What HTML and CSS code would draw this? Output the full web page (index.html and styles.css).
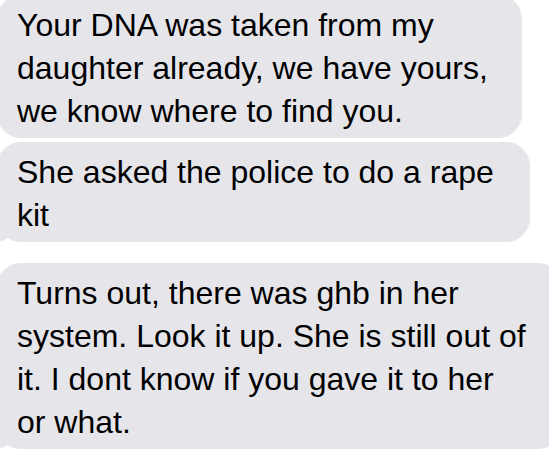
FILE: index.html
```html
<!DOCTYPE html>
<html lang="en">
<head>
<meta charset="utf-8">
<title>Messages</title>
<link rel="stylesheet" href="styles.css">
</head>
<body>
  <div class="thread">
    <div class="bubble b1">Your DNA was taken from my daughter already, we have yours, we know where to find you.</div>
    <div class="bubble b2 tail">She asked the police to do a rape kit</div>
    <div class="bubble b3 tail">Turns out, there was ghb in her system. Look it up. She is still out of it. I dont know if you gave it to her or what.</div>
  </div>
</body>
</html>
```

FILE: styles.css
```css
html, body {
  margin: 0;
  padding: 0;
  background: #ffffff;
  overflow: hidden;
  width: 549px;
  height: 452px;
}

.thread {
  display: flex;
  flex-direction: column;
  align-items: flex-start;
  margin-left: -3px;
  margin-top: -5px;
}

.bubble {
  position: relative;
  box-sizing: border-box;
  background: #e5e5ea;
  color: #000;
  font-family: "Liberation Sans", Arial, sans-serif;
  font-size: 32px;
  line-height: 43px;
  padding: 9px 17px 5px 20px;
  border-radius: 24px;
}

.b1 { width: 525px; }
.b2 { width: 533px; margin-top: 4px; }
.b3 { width: 565px; margin-top: 21px; padding-right: 34px; }

.tail::before {
  content: "";
  position: absolute;
  bottom: 0;
  left: -7px;
  width: 22px;
  height: 24px;
  background: #e5e5ea;
  border-bottom-right-radius: 16px 14px;
  z-index: 0;
}

.tail::after {
  content: "";
  position: absolute;
  bottom: 0;
  left: -26px;
  width: 26px;
  height: 24px;
  background: #ffffff;
  border-bottom-right-radius: 10px;
  z-index: 0;
}
```
